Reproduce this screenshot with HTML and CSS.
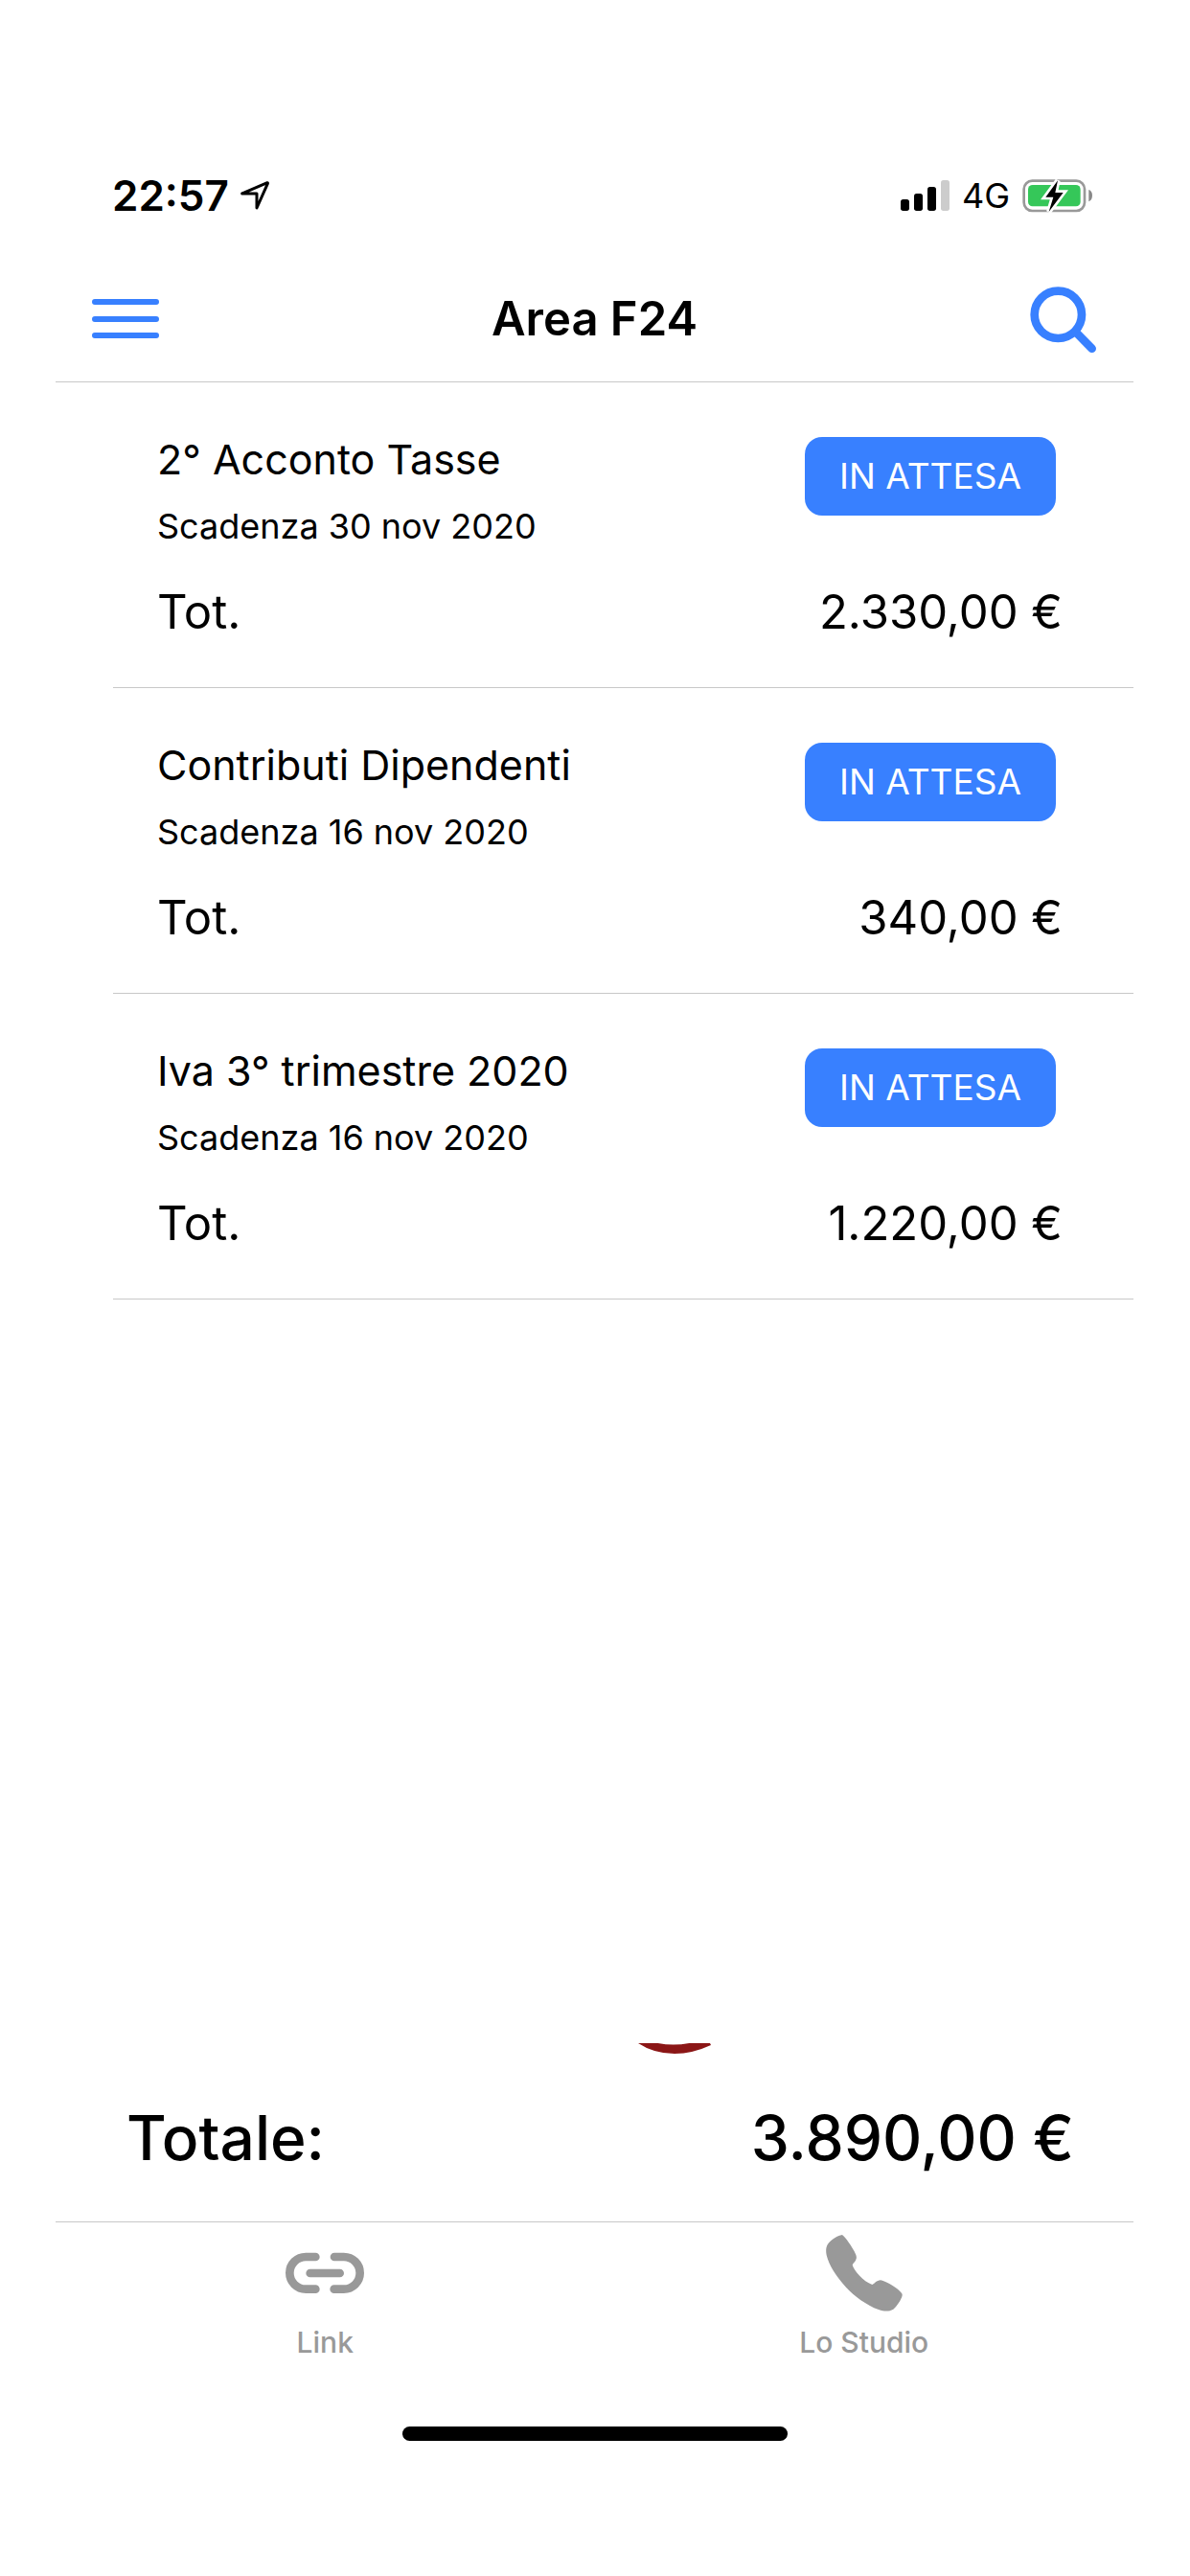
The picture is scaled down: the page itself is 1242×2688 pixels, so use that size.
FILE: index.html
```html
<!DOCTYPE html>
<html lang="it">
<head>
<meta charset="utf-8">
<meta name="viewport" content="width=device-width, initial-scale=1">
<title>Area F24</title>
<link rel="stylesheet" href="styles.css">
</head>
<body>
<div class="app">
  <div class="status-bar">
    <div class="status-left">
      <time class="clock">22:57</time>
      <svg class="location" viewBox="0 0 90 90" aria-hidden="true"><path d="M5 39 L84 5 Q86 5 85 8 L51 84 L51 39 Z"/></svg>
    </div>
    <div class="status-right">
      <svg class="signal" viewBox="0 0 153 96" aria-hidden="true">
        <rect x="0" y="60" width="27" height="36" rx="8"/>
        <rect x="42" y="42" width="27" height="54" rx="8"/>
        <rect x="84" y="21" width="27" height="75" rx="8"/>
        <rect class="signal-off" x="126" y="0" width="27" height="96" rx="8"/>
      </svg>
      <span class="network">4G</span>
      <svg class="battery" viewBox="0 0 222 105" aria-hidden="true">
        <rect class="battery-case" x="5" y="5" width="190" height="94" rx="26"/>
        <rect class="battery-level" x="18" y="18" width="164" height="67" rx="14"/>
        <path class="battery-tip" d="M208 33 Q219 37 219 51 Q219 65 208 70 Z"/>
        <path class="bolt" d="M111 4 L73 56 H97 L83 102 L128 42 H103 Z"/>
      </svg>
    </div>
  </div>

  <header class="toolbar">
    <button class="icon-button" type="button" aria-label="Menu">
      <svg class="menu-icon" viewBox="0 0 70 42"><path d="M3 3H67M3 21H67M3 38H67"/></svg>
    </button>
    <h1 class="toolbar-title">Area F24</h1>
    <button class="icon-button" type="button" aria-label="Cerca">
      <svg class="search-icon" viewBox="0 0 207 207"><circle cx="88" cy="88" r="74"/><path d="M144 143L194 194"/></svg>
    </button>
  </header>

  <main class="content">
    <ul class="payments">
      <li class="payment">
        <div class="payment-head">
          <div class="payment-text">
            <h2 class="payment-title">2° Acconto Tasse</h2>
            <p class="payment-due">Scadenza 30 nov 2020</p>
          </div>
          <button class="badge" type="button">IN ATTESA</button>
        </div>
        <div class="payment-total"><span>Tot.</span><span>2.330,00 €</span></div>
      </li>
      <li class="payment">
        <div class="payment-head">
          <div class="payment-text">
            <h2 class="payment-title">Contributi Dipendenti</h2>
            <p class="payment-due">Scadenza 16 nov 2020</p>
          </div>
          <button class="badge" type="button">IN ATTESA</button>
        </div>
        <div class="payment-total"><span>Tot.</span><span>340,00 €</span></div>
      </li>
      <li class="payment">
        <div class="payment-head">
          <div class="payment-text">
            <h2 class="payment-title">Iva 3° trimestre 2020</h2>
            <p class="payment-due">Scadenza 16 nov 2020</p>
          </div>
          <button class="badge" type="button">IN ATTESA</button>
        </div>
        <div class="payment-total"><span>Tot.</span><span>1.220,00 €</span></div>
      </li>
    </ul>
    <svg class="arc" viewBox="0 0 228 33" aria-hidden="true"><path d="M0 0H62Q110 9 160 0H225L228 6Q170 33 114 33Q50 33 0 0Z"/></svg>
  </main>

  <footer>
    <div class="grand-total"><span>Totale:</span><span>3.890,00 €</span></div>
    <nav class="tabs">
      <a class="tab" href="#link">
        <svg class="tab-icon" viewBox="594 510 252 252" aria-hidden="true"><path class="link-shape" d="M691 585H660.500a50.500 50.500 0 0 0 0 101H691M750 585H779.500a50.500 50.500 0 0 1 0 101H749M674 636H767"/></svg>
        <span>Link</span>
      </a>
      <a class="tab" href="#studio">
        <svg class="tab-icon" viewBox="357 510 252 252" aria-hidden="true"><path class="phone-shape" d="M414 516C424 522 446 556 452 568C459 582 461 588 456 596C452 604 448 604 446 610C450 628 480 662 508 672C514 670 522 658 534 658C548 660 582 680 592 690C600 698 603 700 602 706C600 718 584 742 574 749C560 757 546 756 528 750C490 736 452 708 426 680C396 648 372 610 365 580C362 562 364 552 370 544C378 534 390 522 414 516Z"/></svg>
        <span>Lo Studio</span>
      </a>
    </nav>
    <div class="home-indicator"></div>
  </footer>
</div>
</body>
</html>
```
FILE: styles.css
```css
:root {
  --blue: #3880ff;
  --line: #c8c8c8;
  --muted: #999999;
}

* { box-sizing: border-box; }

body {
  margin: 0;
  background: #fff;
  color: #000;
  font-family: Inter, "Liberation Sans", sans-serif;
}

h1, h2, p, ul { margin: 0; padding: 0; }

button { border: 0; background: none; font-family: inherit; }

svg { display: block; flex: none; }

.app {
  display: flex;
  flex-direction: column;
  min-height: 100vh;
  padding: 172px 59px 141px 58px;
}

/* Status bar */
.status-bar {
  display: flex;
  align-items: center;
  justify-content: space-between;
  height: 64px;
  padding: 0 42px 0 59px;
}

.status-left, .status-right { display: flex; align-items: center; }
.status-left { gap: 12px; }
.clock { font-size: 44px; line-height: 64px; font-weight: 600; }
.location {
  width: 30px;
  height: 30px;
  fill: none;
  stroke: #000;
  stroke-width: 9;
  stroke-linejoin: round;
}
.signal { width: 51px; height: 32px; margin-right: 13px; }
.signal-off { fill: #cccccc; }
.network { font-size: 36px; line-height: 64px; margin-right: 13px; }
.battery { width: 74px; height: 35px; }
.battery-case { fill: none; stroke: #999; stroke-width: 8; }
.battery-level { fill: #35c759; }
.battery-tip { fill: #888; }
.bolt { stroke: #fff; stroke-width: 16; paint-order: stroke; }

/* Toolbar */
.toolbar {
  display: flex;
  align-items: center;
  justify-content: space-between;
  height: 163px;
  padding: 32px 39px 0 38px;
  border-bottom: 1px solid var(--line);
}

.toolbar-title { font-size: 49px; line-height: 64px; font-weight: 600; }
.icon-button { padding: 0; }
.menu-icon { width: 70px; height: 42px; }
.search-icon { width: 69px; height: 69px; }
.menu-icon, .search-icon { fill: none; stroke: var(--blue); stroke-linecap: round; }
.menu-icon { stroke-width: 6; }
.search-icon { stroke-width: 26; }

/* Payments */
.content { flex: 1; display: flex; flex-direction: column; }
.payments { flex: 1; list-style: none; }
.payment {
  margin-left: 60px;
  padding: 50px 74px 48px 46px;
  border-bottom: 1px solid var(--line);
}

.payment-head {
  display: flex;
  align-items: flex-start;
  justify-content: space-between;
  padding-right: 7px;
}

.payment-title { font-size: 43px; line-height: 60px; font-weight: 400; }
.payment-due { margin-top: 18px; font-size: 36px; line-height: 44px; }

.badge {
  margin-top: 7px;
  padding: 0 36px;
  border-radius: 18px;
  background: var(--blue);
  color: #fff;
  font-size: 37px;
  line-height: 82px;
}

.payment-total {
  display: flex;
  justify-content: space-between;
  margin-top: 38px;
  font-size: 49px;
  line-height: 60px;
}

.arc { width: 76px; height: 11px; margin-left: 54%; fill: #8b1616; }

/* Totals and tabs */
.grand-total {
  display: flex;
  align-items: center;
  justify-content: space-between;
  height: 175px;
  padding: 0 62px 0 74px;
  font-size: 64px;
  line-height: 80px;
  font-weight: 500;
}

.tabs {
  display: grid;
  grid-template-columns: 1fr 1fr;
  border-top: 1px solid var(--line);
}

.tab {
  display: flex;
  flex-direction: column;
  align-items: center;
  gap: 12px;
  padding-top: 11px;
  color: var(--muted);
  font-size: 30px;
  line-height: 36px;
  font-weight: 500;
  text-decoration: none;
}

.tab-icon { width: 84px; height: 84px; }
.link-shape { fill: none; stroke: currentColor; stroke-width: 26; stroke-linecap: round; }
.phone-shape { fill: currentColor; }

.home-indicator {
  width: 402px;
  height: 15px;
  margin: 70px auto 0;
  border-radius: 8px;
  background: #000;
}
```
